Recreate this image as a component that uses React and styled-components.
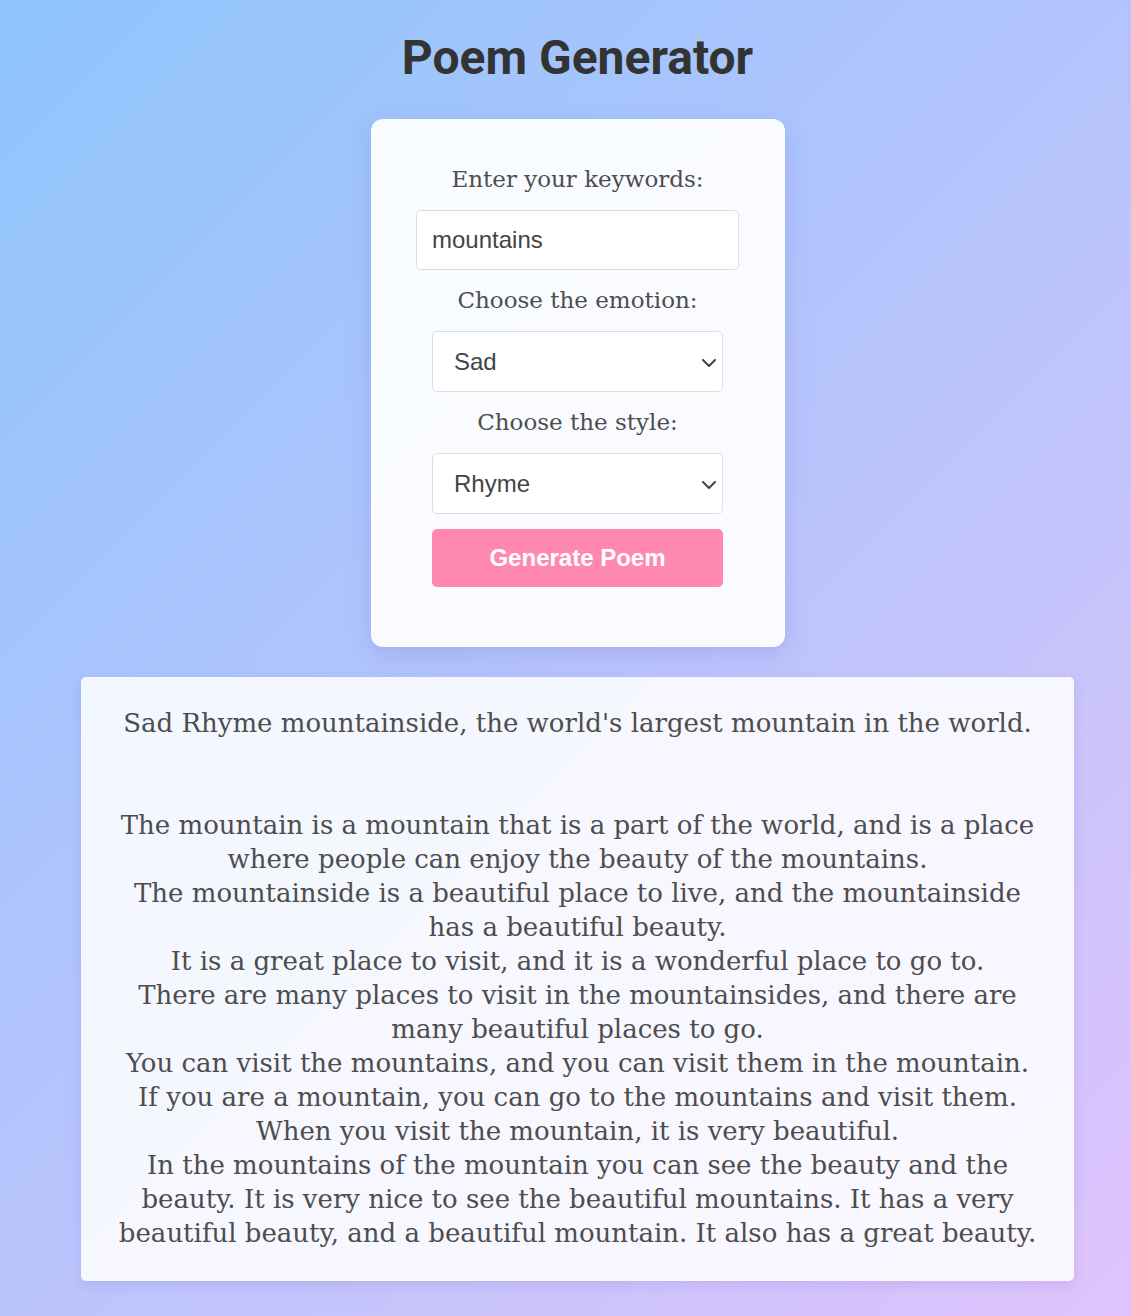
import React, { useState } from "react";
import styled, { createGlobalStyle } from "styled-components";

const GlobalStyle = createGlobalStyle`
  html, body {
    margin: 0;
    padding: 0;
  }
  body {
    font-family: "DejaVu Serif", serif;
    color: #4d4d4d;
  }
`;

const poemLines = [
  "Sad Rhyme mountainside, the world's largest mountain in the world.",
  "",
  "",
  "The mountain is a mountain that is a part of the world, and is a place",
  "where people can enjoy the beauty of the mountains.",
  "The mountainside is a beautiful place to live, and the mountainside",
  "has a beautiful beauty.",
  "It is a great place to visit, and it is a wonderful place to go to.",
  "There are many places to visit in the mountainsides, and there are",
  "many beautiful places to go.",
  "You can visit the mountains, and you can visit them in the mountain.",
  "If you are a mountain, you can go to the mountains and visit them.",
  "When you visit the mountain, it is very beautiful.",
  "In the mountains of the mountain you can see the beauty and the",
  "beauty. It is very nice to see the beautiful mountains. It has a very",
  "beautiful beauty, and a beautiful mountain. It also has a great beauty.",
];

// native-looking chevron drawn over the select
const Chevron = () => (
  <ChevronIcon width="14" height="8" viewBox="0 0 14 8">
    <polyline
      points="1,1 7,7 13,1"
      fill="none"
      stroke="#444"
      strokeWidth="2"
      strokeLinecap="round"
      strokeLinejoin="round"
    />
  </ChevronIcon>
);

const Dropdown = ({ value, onChange, options }) => (
  <SelectWrap>
    <Select value={value} onChange={onChange}>
      {options.map((o) => (
        <option key={o}>{o}</option>
      ))}
    </Select>
    <Chevron />
  </SelectWrap>
);

const App = () => {
  const [keywords, setKeywords] = useState("mountains");
  const [emotion, setEmotion] = useState("Sad");
  const [style, setStyle] = useState("Rhyme");

  return (
    <Page>
      <GlobalStyle />
      <Title>Poem Generator</Title>

      <Card>
        <Label>Enter your keywords:</Label>
        <TextInput
          type="text"
          value={keywords}
          onChange={(e) => setKeywords(e.target.value)}
        />
        <Label>Choose the emotion:</Label>
        <Dropdown
          value={emotion}
          onChange={(e) => setEmotion(e.target.value)}
          options={["Happy", "Sad", "Angry", "Calm"]}
        />
        <Label>Choose the style:</Label>
        <Dropdown
          value={style}
          onChange={(e) => setStyle(e.target.value)}
          options={["Rhyme", "Free verse", "Haiku"]}
        />
        <Button type="button">Generate Poem</Button>
      </Card>

      <Output>{poemLines.join("\n")}</Output>
    </Page>
  );
};

const Page = styled.div`
  min-height: 100vh;
  box-sizing: border-box;
  padding: 0 0 35px 24px;
  display: flex;
  flex-direction: column;
  align-items: center;
  background: linear-gradient(135deg, #8ec5fc 0%, #e0c3fc 100%);
`;

const Title = styled.h1`
  margin: 30px 0 33px;
  font-family: Roboto, "Liberation Sans", sans-serif;
  font-size: 48px;
  font-weight: 700;
  line-height: 56px;
  color: #333;
`;

const Card = styled.div`
  width: 414px;
  box-sizing: border-box;
  padding: 45px 0 60px;
  display: flex;
  flex-direction: column;
  align-items: center;
  gap: 15px;
  background: rgba(255, 255, 255, 0.92);
  border-radius: 12px;
  box-shadow: 0 8px 24px rgba(90, 90, 180, 0.18);
`;

const Label = styled.label`
  display: block;
  margin-bottom: 1px;
  font-size: 23px;
  line-height: 30px;
  color: #4d4d4d;
`;

const controlBase = `
  box-sizing: border-box;
  font-family: "Liberation Sans", Arial, sans-serif;
  font-size: 24px;
  color: #444;
  background: #fff;
  border: 1px solid #ddd;
  border-radius: 5px;
  outline: none;
`;

const TextInput = styled.input`
  ${controlBase}
  width: 323px;
  height: 60px;
  padding: 0 15px;
`;

const SelectWrap = styled.div`
  position: relative;
  width: 291px;
  height: 61px;
`;

const Select = styled.select`
  ${controlBase}
  appearance: none;
  width: 100%;
  height: 100%;
  padding: 0 30px 0 21px;
`;

const ChevronIcon = styled.svg`
  position: absolute;
  right: 7px;
  top: 50%;
  margin-top: -3px;
  pointer-events: none;
`;

const Button = styled.button`
  width: 291px;
  height: 58px;
  border: none;
  border-radius: 5px;
  background: #ff88b1;
  color: #fff;
  font-family: "Liberation Sans", Arial, sans-serif;
  font-size: 24px;
  font-weight: 700;
  cursor: pointer;
`;

const Output = styled.div`
  width: 993px;
  box-sizing: border-box;
  margin-top: 30px;
  padding: 29px 10px 31px;
  background: rgba(255, 255, 255, 0.86);
  border-radius: 5px;
  box-shadow: 0 4px 12px rgba(90, 90, 180, 0.15);
  font-size: 26px;
  line-height: 34px;
  text-align: center;
  white-space: pre-line;
  color: #4d4d4d;
`;

export default App;
